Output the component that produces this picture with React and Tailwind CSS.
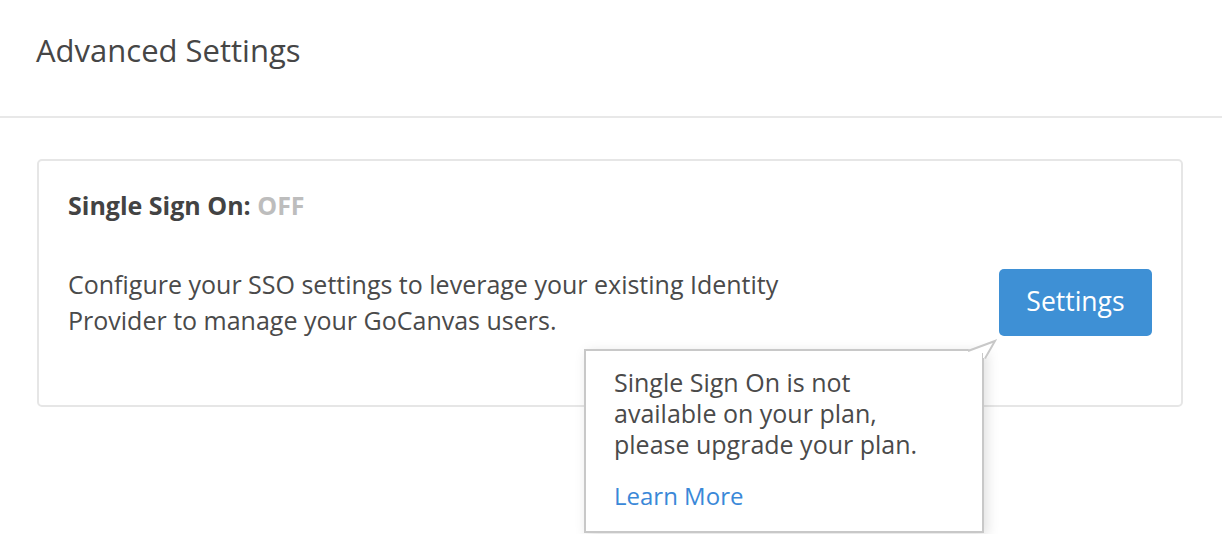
import React from "react";

export default function App() {
  return (
    <div className="relative w-[1222px] h-[534px] overflow-hidden bg-white text-[#4a4a4a] [font-family:'Open_Sans',sans-serif]">
      <div className="h-[118px] pt-[35px] px-[36px] border-b-2 border-[#e8e8e8]">
        <h1 className="text-[31px] leading-[30px] font-normal text-[#464646]">Advanced Settings</h1>
      </div>

      <div className="mt-[41px] ml-[37px] w-[1146px] rounded-[5px] border-2 border-[#e6e6e6] pt-[32px] pb-[67px] pl-[29px] pr-[29px]">
        <div className="text-[25px] leading-[25px] font-bold text-[#434343]">
          Single Sign On: <span className="text-[#bdbdbd]">OFF</span>
        </div>
        <div className="mt-[48px] flex items-center justify-between">
          <p className="text-[25px] leading-[36px] whitespace-nowrap">
            Configure your SSO settings to leverage your existing Identity
            <br />
            Provider to manage your GoCanvas users.
          </p>
          <button className="w-[153px] h-[67px] rounded-[5px] bg-[#3e90d5] text-white text-[26.5px]">
            Settings
          </button>
        </div>
      </div>

      <div className="absolute left-[584px] top-[349px] w-[400px] h-[184px] bg-white border-2 border-[#c8c8c8] shadow-[3px_3px_12px_rgba(0,0,0,0.13)] pt-[16px] pl-[28px]">
        <p className="text-[25px] leading-[31px] whitespace-nowrap">
          Single Sign On is not
          <br />
          available on your plan,
          <br />
          please upgrade your plan.
        </p>
        <a href="#" className="block mt-[20px] text-[24px] leading-[31px] text-[#3a88d8]">
          Learn More
        </a>
        <svg className="absolute left-[380px] top-[-14px]" width="34" height="26" viewBox="0 0 34 26">
          <path d="M2 16 L2 13 L29 4 L21 21 L17 21 L17 16 Z" fill="white" />
          <polyline points="2,14 29,4 19,21.5" fill="none" stroke="#c8c8c8" strokeWidth="2" strokeLinejoin="miter" />
        </svg>
      </div>
    </div>
  );
}
